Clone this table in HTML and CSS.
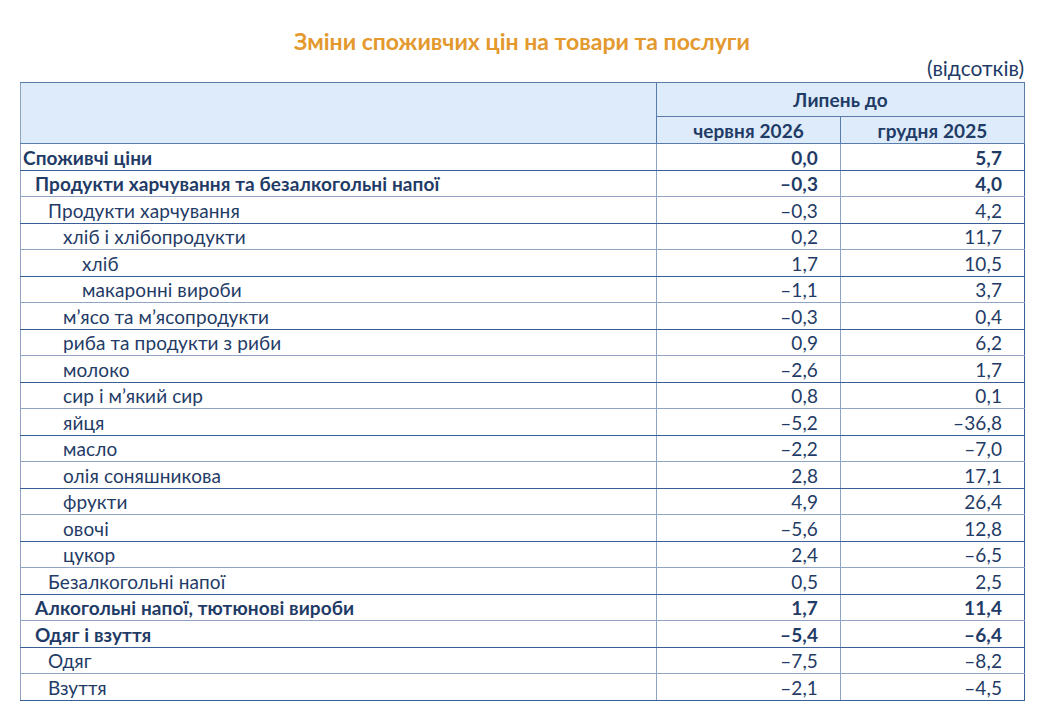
FILE: index.html
```html
<!DOCTYPE html>
<html lang="uk">
<head>
<meta charset="utf-8">
<title>Зміни споживчих цін на товари та послуги</title>
<link rel="stylesheet" href="styles.css">
</head>
<body>
<div class="page">
  <h1 class="title">Зміни споживчих цін на товари та послуги</h1>
  <div class="unit">(відсотків)</div>
  <table class="cpi">
    <colgroup>
      <col class="c-name"><col class="c-val"><col class="c-val2">
    </colgroup>
    <thead>
      <tr class="h1">
        <th rowspan="2" class="blank"></th>
        <th colspan="2">Липень до</th>
      </tr>
      <tr class="h2">
        <th>червня 2026</th>
        <th>грудня 2025</th>
      </tr>
    </thead>
    <tbody>
      <tr class="b"><td class="l0">Споживчі ціни</td><td>0,0</td><td>5,7</td></tr>
      <tr class="b"><td class="l1">Продукти харчування та безалкогольні напої</td><td>–0,3</td><td>4,0</td></tr>
      <tr><td class="l2">Продукти харчування</td><td>–0,3</td><td>4,2</td></tr>
      <tr><td class="l3">хліб і хлібопродукти</td><td>0,2</td><td>11,7</td></tr>
      <tr><td class="l4">хліб</td><td>1,7</td><td>10,5</td></tr>
      <tr><td class="l4">макаронні вироби</td><td>–1,1</td><td>3,7</td></tr>
      <tr><td class="l3">м’ясо та м’ясопродукти</td><td>–0,3</td><td>0,4</td></tr>
      <tr><td class="l3">риба та продукти з риби</td><td>0,9</td><td>6,2</td></tr>
      <tr><td class="l3">молоко</td><td>–2,6</td><td>1,7</td></tr>
      <tr><td class="l3">сир і м’який сир</td><td>0,8</td><td>0,1</td></tr>
      <tr><td class="l3">яйця</td><td>–5,2</td><td>–36,8</td></tr>
      <tr><td class="l3">масло</td><td>–2,2</td><td>–7,0</td></tr>
      <tr><td class="l3">олія соняшникова</td><td>2,8</td><td>17,1</td></tr>
      <tr><td class="l3">фрукти</td><td>4,9</td><td>26,4</td></tr>
      <tr><td class="l3">овочі</td><td>–5,6</td><td>12,8</td></tr>
      <tr><td class="l3">цукор</td><td>2,4</td><td>–6,5</td></tr>
      <tr><td class="l2">Безалкогольні напої</td><td>0,5</td><td>2,5</td></tr>
      <tr class="b"><td class="l1">Алкогольні напої, тютюнові вироби</td><td>1,7</td><td>11,4</td></tr>
      <tr class="b"><td class="l1">Одяг і взуття</td><td>–5,4</td><td>–6,4</td></tr>
      <tr><td class="l2">Одяг</td><td>–7,5</td><td>–8,2</td></tr>
      <tr><td class="l2">Взуття</td><td>–2,1</td><td>–4,5</td></tr>
    </tbody>
  </table>
</div>
</body>
</html>
```
FILE: styles.css
```css
html, body {
  margin: 0;
  padding: 0;
  background: #ffffff;
}
body {
  font-family: Lato, "Open Sans", "Noto Sans", sans-serif;
  color: #1f3b66;
}
.page {
  width: 1004px;
  margin-left: 20px;
  padding-top: 26px;
}
.title {
  margin: 0;
  text-align: center;
  font-size: 23px;
  line-height: 30px;
  font-weight: bold;
  color: #e3992d;
}
.unit {
  text-align: right;
  font-size: 21px;
  line-height: 24px;
  margin-top: 0;
  margin-bottom: 2px;
}
.cpi {
  width: 1004px;
  table-layout: fixed;
  border-collapse: collapse;
  font-size: 19px;
  letter-spacing: 0.1px;
}
.c-name { width: 636px; }
.c-val { width: 184px; }
.c-val2 { width: 184px; }
.cpi th {
  background: #ddebfa;
  font-weight: bold;
  text-align: center;
  padding: 0;
  border: 1px solid #5a7cab;
}
.cpi th.blank {
  border-left-color: #8ea4c2;
}
.cpi tr.h1 th { height: 33px; }
.cpi tr.h2 th { height: 26px; }
.cpi td {
  height: 24.5px;
  padding: 1px 22px 0 0;
  text-align: right;
  border-left: 1px solid #3a5f96;
  border-right: 1px solid #8ea4c2;
  border-bottom: 1px solid #8ea4c2;
  white-space: nowrap;
}
.cpi tbody tr:nth-child(odd) td { border-bottom-color: #3a5f96; }
.cpi td:first-child {
  text-align: left;
  border-left-color: #8ea4c2;
}
.cpi td:last-child { border-right-color: #3a5f96; }
.cpi tr.b td { font-weight: bold; }
.l0 { padding-left: 2px !important; }
.l1 { padding-left: 14px !important; }
.l2 { padding-left: 27px !important; }
.l3 { padding-left: 42px !important; }
.l4 { padding-left: 61px !important; }
```
